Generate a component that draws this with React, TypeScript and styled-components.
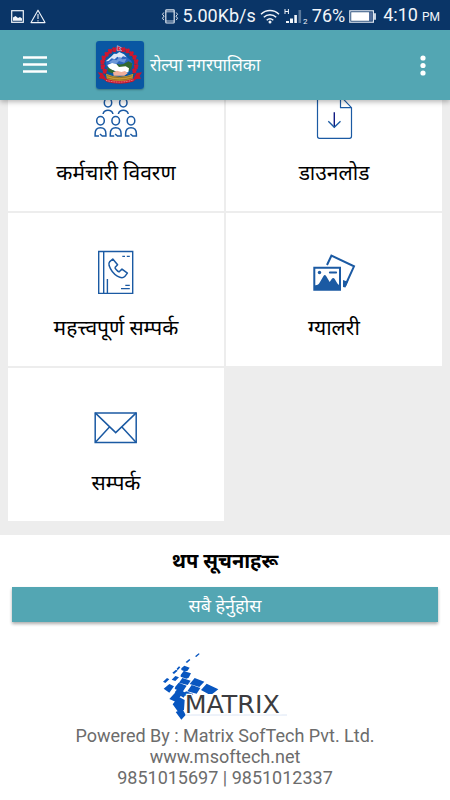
import React from "react";
import styled, { createGlobalStyle } from "styled-components";

const GlobalStyle = createGlobalStyle`
  *, *::before, *::after { box-sizing: border-box; }
  body {
    margin: 0;
    background: #fff;
    font-family: Roboto, "Noto Sans", "Noto Sans Devanagari", sans-serif;
  }
`;

const NAVY = "#0a3567";
const TEAL = "#53a6b3";
const BLUE = "#1b5aa3";

const Page = styled.div`
  min-height: 100vh;
`;

const TopArea = styled.header`
  position: sticky;
  top: 0;
  z-index: 2;
  box-shadow: 0 2px 5px rgba(0, 0, 0, 0.28);
`;

const StatusBar = styled.div`
  display: flex;
  align-items: center;
  height: 30px;
  padding: 2px 10px 0 11px;
  background: ${NAVY};
  color: #f1f5fa;
  font-size: 18px;
  line-height: 28px;
`;

const StatusGroup = styled.div<{ $end?: boolean }>`
  display: flex;
  align-items: center;
  gap: ${(p) => (p.$end ? "4px" : "6px")};
  margin-left: ${(p) => (p.$end ? "auto" : "0")};
  white-space: nowrap;
  svg { display: block; flex: none; }
`;

const Clock = styled.time`
  display: flex;
  align-items: baseline;
  gap: 4px;
  margin-left: 2px;
`;

const Meridiem = styled.span`
  font-size: 12px;
`;

const AppBar = styled.div`
  display: flex;
  align-items: center;
  height: 70px;
  padding: 0 12px 0 15px;
  background: ${TEAL};
`;

const IconButton = styled.button<{ $wide?: boolean }>`
  display: grid;
  place-items: center;
  width: ${(p) => (p.$wide ? "40px" : "30px")};
  height: 40px;
  padding: 0;
  border: 0;
  background: none;
  color: #fff;
  cursor: pointer;
`;

const Brand = styled.div`
  display: flex;
  align-items: center;
  flex: 1;
  gap: 6px;
  margin-left: 41px;
  svg {
    flex: none;
    border-radius: 3px;
    box-shadow: 0 1px 2px rgba(0, 0, 0, 0.3);
  }
`;

const Title = styled.h1`
  margin: 0;
  color: #fff;
  font-size: 17px;
  font-weight: 400;
  line-height: 28px;
`;

const Menu = styled.nav`
  display: grid;
  grid-template-columns: 1fr 1fr;
  grid-auto-rows: 153px;
  gap: 2px;
  margin-top: -42px;
  padding: 0 8px 14px;
  background: #ededed;
`;

const Tile = styled.a`
  display: flex;
  flex-direction: column;
  align-items: center;
  gap: 18px;
  padding-top: 37px;
  background: #fff;
  color: #000;
  text-decoration: none;
  svg { display: block; flex: none; }
`;

const TileLabel = styled.span`
  font-size: 21px;
  line-height: 32px;
`;

const Notices = styled.section`
  padding: 12px 12px 0;
  text-align: center;
`;

const NoticeHeading = styled.h2`
  margin: 0 0 12px;
  font-size: 20px;
  font-weight: 700;
  line-height: 28px;
`;

const AllButton = styled.button`
  display: block;
  width: 100%;
  height: 35px;
  padding: 0;
  border: 0;
  background: ${TEAL};
  box-shadow: 0 2px 3px rgba(0, 0, 0, 0.32);
  color: #fff;
  font: inherit;
  font-size: 18px;
  cursor: pointer;
`;

const Footer = styled.footer`
  display: flex;
  flex-direction: column;
  align-items: center;
  padding-top: 23px;
  color: #6c6c6c;
  font-size: 18px;
  line-height: 21px;
  svg { display: block; }
`;

const SiteLink = styled.a`
  color: inherit;
  text-decoration: none;
`;

const PictureIcon = () => (
  <svg width="13" height="13" viewBox="0 0 13 13" fill="none" stroke="#f1f5fa" aria-hidden="true">
    <rect x="0.7" y="0.7" width="11.6" height="11.6" strokeWidth="1.2" />
    <path d="M2 10.8V7.5L4.5 6l2.5 2 2-1 2 1.5v2.3z" fill="#f1f5fa" stroke="none" />
  </svg>
);

const WarningIcon = () => (
  <svg width="16" height="15" viewBox="0 0 16 15" fill="none" stroke="#f1f5fa" strokeWidth="1.1" aria-hidden="true">
    <path d="M8 1.2 15 13.6H1z" strokeLinejoin="round" />
    <path d="M8 5v5M8 11.2v1.2" />
  </svg>
);

const VibrateIcon = () => (
  <svg width="18" height="15" viewBox="0 0 18 15" fill="none" stroke="#dfe7f1" strokeWidth="1.2" aria-hidden="true">
    <rect x="4.8" y="0.8" width="8.4" height="13.2" rx="0.8" />
    <path d="M5 2.8h8M5 12h8" strokeWidth="0.8" />
    <path d="M2.8 3.5 1.5 5.3 3 7.2 1.5 9.2l1.3 1.9M15.2 3.5l1.3 1.8L15 7.2l1.5 2-1.3 1.9" strokeWidth="1" />
  </svg>
);

const WifiIcon = () => (
  <svg width="20" height="15" viewBox="0 0 20 15" fill="none" stroke="#f1f5fa" strokeWidth="1.5" aria-hidden="true">
    <path d="M1 5.2a13 13 0 0 1 18 0M3.8 8.3a9 9 0 0 1 12.4 0M6.7 11.2a5 5 0 0 1 6.6 0" />
    <circle cx="10" cy="13" r="1.5" fill="#f1f5fa" stroke="none" />
  </svg>
);

const SignalIcon = () => (
  <svg width="24" height="17" viewBox="0 0 24 17" fill="#f1f5fa" aria-hidden="true">
    <path d="M1 1v5M4.400 1v5M1 3.500h3.400" stroke="#f1f5fa" fill="none" />
    <path d="M2 13h3v2H2zM6 10.500h3V15H6zM10.300 7h2.600v8h-2.600z" />
    <path d="M14.500 2h2.600v13h-2.600z" opacity="0.35" />
    <text x="19" y="15.500" fontFamily="Roboto" fontSize="8">2</text>
  </svg>
);

const BatteryIcon = () => (
  <svg width="28" height="13" viewBox="0 0 28 13" fill="none" aria-hidden="true">
    <rect x="0.8" y="0.8" width="23.6" height="11.4" stroke="#dfe7f1" strokeWidth="1.2" />
    <rect x="2.2" y="2.2" width="17.8" height="8.6" fill="#fff" />
    <rect x="20" y="2.2" width="3.6" height="8.6" fill="#536f9c" />
    <path d="M26 3.3v6.4" stroke="#dfe7f1" strokeWidth="1.8" />
  </svg>
);

const MenuIcon = () => (
  <svg width="24" height="18" viewBox="0 0 24 18" stroke="currentColor" strokeWidth="2.6" aria-hidden="true">
    <path d="M0 1.5h24M0 8.500h24M0 15.500h24" />
  </svg>
);

const MoreIcon = () => (
  <svg width="6" height="21" viewBox="0 0 6 21" fill="currentColor" aria-hidden="true">
    <circle cx="3" cy="3" r="2.6" />
    <circle cx="3" cy="10.5" r="2.6" />
    <circle cx="3" cy="18" r="2.6" />
  </svg>
);

const blossoms: [number, number][] = [
  [54, 25], [41, 30], [31, 39], [22, 50], [18, 63], [19, 77], [25, 90],
  [80, 25], [93, 29], [105, 37], [114, 48], [119, 61], [119, 76], [114, 89],
];

const EmblemIcon = () => (
  <svg width="48" height="48" viewBox="0 0 144 144" aria-hidden="true">
    <rect width="144" height="144" fill="#0957a3" />
    <path d="M50 26Q18 45 20 82L34 106M86 26q34 18 33 52l-9 27" fill="none" stroke="#3c4a3a" strokeWidth="4" />
    <path d="M29 62 46 48l10-10 14-4 13 5 12 11 11 9 4 12-10 14H34z" fill="#2c66bf" />
    <path d="m29 61 16-14 9-9 8 1 8-6 14 7 8 9-11-3-8 7-9-6-8 8-9-3-9 8z" fill="#dfe8f5" />
    <path d="m37 65 15-10 9 3 11-11 6 8 14-2-7 12-16-5-8 8-12-2z" fill="#6d98d8" />
    <path d="M62 69q18 5 35-8l12 6q0 14-8 23l-40-8z" fill="#33692f" />
    <path d="m34 72 14-6 13 3 8 9 20-2 10 6-2 12-22 2-34-11z" fill="#fff" />
    <path d="m33 77 12 8 15 7-12 5-11-5z" fill="#33692f" />
    <path d="m51 94 12-5 13 4 11-3 8 7-10 7H53z" fill="#f1b09a" />
    <path d="M30 98q20 9 41 9t41-9l-3 18q-38 12-76 0z" fill="#c99a32" />
    <path d="M33 104q38 12 76 0M33 111q38 12 76 0" stroke="#80601f" strokeWidth="2" fill="none" />
    <path d="m5 94 14 2 11 17q41 14 82 0l10-17 16-2-7 10 4 9-14 1-10 8q-39 12-78 1l-11-9-14-2 5-8z" fill="#c9152b" />
    <path d="M30 118q40 11 82-1" stroke="#f4cdcf" strokeWidth="2" strokeDasharray="3 2" fill="none" />
    <g fill="#cc1730">
      {blossoms.map(([x, y]) => (
        <path key={`${x}-${y}`} d={`M${x - 6} ${y - 3}l4-4 3 2 5-2 3 6-3 3 1 5-6 1-6-1 1-5z`} />
      ))}
    </g>
    <path d="m64 14 12 6-6 3 7 6H63z" fill="#e11c38" stroke="#f6e8f0" strokeWidth="1.5" />
  </svg>
);

const Glyph = ({ children }: { children: React.ReactNode }) => (
  <svg width="44" height="44" viewBox="0 0 44 44" fill="none" stroke={BLUE} strokeWidth="1.5" aria-hidden="true">
    {children}
  </svg>
);

const StaffIcon = () => (
  <Glyph>
    {[14, 29.3].map((x) => (
      <g key={x}>
        <ellipse cx={x} cy="7.8" rx="3.7" ry="4.2" />
        <path d={`M${x - 4.8} 19v-.6q1-3.200 4.8-3.200t4.8 3.200v.6`} />
      </g>
    ))}
    {[6.5, 21.7, 37].map((x) => (
      <g key={x}>
        <ellipse cx={x} cy="25.7" rx="3.8" ry="4.2" />
        <path d={`M${x - 1.5} 41H${x - 5.4}V39q0-6.200 5.400-6.200T${x + 5.4} 39v2h-3.600l-2.400-2`} />
      </g>
    ))}
  </Glyph>
);

const DownloadIcon = () => (
  <Glyph>
    <path d="M28.5 1H7.5Q5.5 1 5.5 3v38.3q0 2 2 2h30q2 0 2-2V12.700zM28.500 1v11.700h11" strokeWidth="1.2" />
    <path d="M22.3 17.3v15" stroke="#101a82" strokeWidth="1.4" />
    <path d="m16.3 26.3 6 6 6.2-6" strokeWidth="1.3" />
  </Glyph>
);

const PhoneBookIcon = () => (
  <Glyph>
    <path d="M4.700 1.500h34v42h-34zM9.700 1.500v42M13.400 29v14.500" strokeWidth="1.4" />
    <path d="M28.300 6.400H31M32.800 6.400h3M31.300 35.400h4.500M27 38.600h8.800" strokeWidth="1.3" />
    <path
      d="m18.800 9 4.800 5.700-2.400 2.500q-.4 1 .7 2.100l1.800 1.800q1 1 2 .2l2.300-2.200 5.400 4-2.700 3.500q-2.400 2.500-7.400-.4-5.800-3.500-8.200-10.600-.7-2.300.7-4z"
      strokeLinejoin="round"
    />
  </Glyph>
);

const GalleryIcon = () => (
  <Glyph>
    <path d="m15 15 4.400-9.300 22.600 10.600-9 19.700" strokeWidth="2" />
    <path d="m31 30 3.400 1.200 2.200-1-3.200 7.300L31 37z" fill={BLUE} stroke="none" />
    <path d="M2.300 17.700H28v22H2.300z" strokeWidth="2" />
    <path d="M2 35q4 1 6-3l3.500-6q1.300-2 2.600 0l3.600 6 2-3q1.500-2 3 0l2.700 4.500L28 36v4H2z" fill={BLUE} stroke="none" />
    <circle cx="7.500" cy="22.500" r="1.700" fill={BLUE} stroke="none" />
    <path d="M17.800 22.500h6.400" strokeWidth="1.800" strokeLinecap="round" />
  </Glyph>
);

const MailIcon = () => (
  <Glyph>
    <path d="M1.200 7.900h41v29.700h-41z" />
    <path d="m1.200 7.900 20.500 19.700L42.200 7.900M1.200 37.600l14.500-15.900M42.200 37.600 27.700 21.700" />
  </Glyph>
);

const MatrixLogo = () => (
  <svg width="150" height="80" viewBox="0 0 450 240" role="img" aria-label="Matrix">
    <path
      fill="#0856c0"
      d="M135 34l11-9 3 2-10 9zM107 51l11-9 3 3-10 9zM94 70l9-8 16 6-7 10-8 1-10-4zM80 71l7-7 4 3-8 9zM67 83l11-9 5 3-11 10zM92 90l9-12 22 7-7 13-7 3-17-6zM39 110l12-11 7 4-12 11zM65 104l11-11 11 4-11 11zM87 113l10-14 25 8-9 13zM41 131l17-14 14 7-14 19zM76 125l10-12 24 9-12 18-24-8zM119 117l15-18 29 11-15 16zM112 139l13-19 26 9-11 17zM153 135l17-19 35 17-18 14h-12zM74 142l9-11 26 13-8 14zM58 162l20-22 17 9-17 22zM68 178l18-23 18 10-2 30-19 4zM77 201l21-8 9 17-13 14zM100 147l8-8 22 8-13 13z"
    />
    <path d="M106 210h305" stroke="#dce6f5" strokeWidth="3" />
    <text x="104" y="203" fontFamily="DejaVu Sans" fontSize="76" stroke="#fff" strokeWidth="8" paintOrder="stroke" fill="#3b3c40">
      MATRIX
    </text>
  </svg>
);

const tiles = [
  { label: "कर्मचारी विवरण", Icon: StaffIcon },
  { label: "डाउनलोड", Icon: DownloadIcon },
  { label: "महत्त्वपूर्ण सम्पर्क", Icon: PhoneBookIcon },
  { label: "ग्यालरी", Icon: GalleryIcon },
  { label: "सम्पर्क", Icon: MailIcon },
];

export default function App() {
  return (
    <Page>
      <GlobalStyle />
      <TopArea>
        <StatusBar>
          <StatusGroup>
            <PictureIcon />
            <WarningIcon />
          </StatusGroup>
          <StatusGroup $end>
            <VibrateIcon />
            <span>5.00Kb/s</span>
            <WifiIcon />
            <SignalIcon />
            <span>76%</span>
            <BatteryIcon />
            <Clock>
              4:10 <Meridiem>PM</Meridiem>
            </Clock>
          </StatusGroup>
        </StatusBar>
        <AppBar>
          <IconButton type="button" $wide aria-label="Menu">
            <MenuIcon />
          </IconButton>
          <Brand>
            <EmblemIcon />
            <Title>रोल्पा नगरपालिका</Title>
          </Brand>
          <IconButton type="button" aria-label="More options">
            <MoreIcon />
          </IconButton>
        </AppBar>
      </TopArea>
      <main>
        <Menu>
          {tiles.map(({ label, Icon }) => (
            <Tile key={label} href="#">
              <Icon />
              <TileLabel>{label}</TileLabel>
            </Tile>
          ))}
        </Menu>
        <Notices>
          <NoticeHeading>थप सूचनाहरू</NoticeHeading>
          <AllButton type="button">सबै हेर्नुहोस</AllButton>
        </Notices>
      </main>
      <Footer>
        <MatrixLogo />
        <div>Powered By : Matrix SofTech Pvt. Ltd.</div>
        <SiteLink href="#">www.msoftech.net</SiteLink>
        <div>9851015697 | 9851012337</div>
      </Footer>
    </Page>
  );
}
